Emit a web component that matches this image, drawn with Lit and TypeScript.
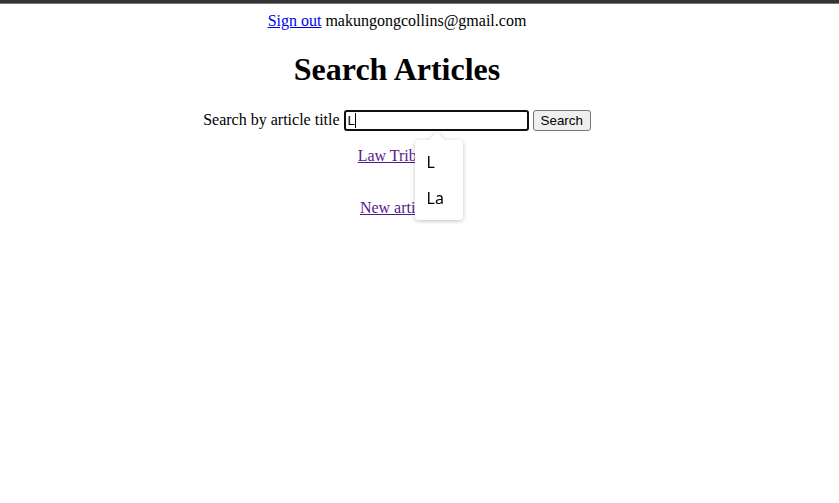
import { LitElement, html, css } from "lit";
import { customElement, state } from "lit/decorators.js";

@customElement("suggestion-list")
class SuggestionList extends LitElement {
  static properties = { items: { type: Array } };
  declare items: string[];

  constructor() {
    super();
    this.items = [];
  }

  static styles = css`
    :host {
      display: block;
      box-sizing: border-box;
      min-width: 48px;
      padding: 4px 0;
      background: #fff;
      border-radius: 4px;
      filter: drop-shadow(0 1px 2px rgba(0, 0, 0, 0.25));
      font: 16px/36px "Noto Sans", sans-serif;
      color: #000;
    }
    .arrow {
      position: absolute;
      left: 13px;
      top: -8px;
      display: block;
    }
    .list {
      list-style: none;
      margin: 0;
      padding: 0;
    }
    .item {
      padding: 0 12px;
      text-align: left;
    }
  `;

  render() {
    return html`
      <svg class="arrow" width="18" height="9" viewBox="0 0 18 9" aria-hidden="true">
        <path d="M0 9 L9 0 L18 9 Z" fill="#fff" />
      </svg>
      <ul class="list">
        ${this.items.map((item) => html`<li class="item">${item}</li>`)}
      </ul>
    `;
  }
}

@customElement("app-root")
class AppRoot extends LitElement {
  @state() private query = "L";

  static styles = css`
    :host {
      display: block;
      font: 16px/18px "Liberation Serif", serif;
      color: #000;
      background: #fff;
    }
    .topbar {
      height: 3px;
      background: #333;
      border-bottom: 1px solid #777;
    }
    .page {
      display: flex;
      flex-direction: column;
      align-items: center;
      padding: 8px 45px 8px 0;
    }
    .account,
    .title {
      margin: 0;
    }
    .title {
      font-size: 32px;
      line-height: 37px;
      font-weight: bold;
      padding: 21px 0 22px;
    }
    .signout {
      color: #0000ee;
    }
    .search {
      display: flex;
      align-items: flex-start;
      gap: 4px;
    }
    .label {
      line-height: 20px;
    }
    .field {
      position: relative;
      display: flex;
    }
    .input {
      box-sizing: border-box;
      width: 185px;
      height: 21px;
      margin: 0;
      padding: 0 2px;
      border: 2px solid #101010;
      border-radius: 3px;
      outline: none;
      background: #fff;
      color: #000;
      font-family: "Liberation Sans", sans-serif;
    }
    .caret {
      position: absolute;
      left: 11px;
      top: 3px;
      width: 1px;
      height: 15px;
      background: #000;
    }
    .suggestions {
      position: absolute;
      left: 71px;
      top: 30px;
      z-index: 1;
    }
    .submit {
      box-sizing: border-box;
      height: 21px;
      margin: 0;
      padding: 0 7px;
      border: 1px solid #767676;
      border-radius: 3px;
      background: #efefef;
      color: #000;
      font-family: "Liberation Sans", sans-serif;
    }
    .results {
      display: flex;
      flex-direction: column;
      align-items: center;
      gap: 34px;
      padding-top: 16px;
    }
    .article {
      color: #551a8b;
    }
  `;

  render() {
    return html`
      <div class="topbar"></div>
      <main class="page">
        <p class="account">
          <a class="signout" href="#signout">Sign out</a> makungongcollins@gmail.com
        </p>
        <h1 class="title">Search Articles</h1>
        <form class="search" @submit=${(e: Event) => e.preventDefault()}>
          <label class="label" for="query">Search by article title</label>
          <div class="field">
            <input
              class="input"
              id="query"
              type="text"
              autocomplete="off"
              .value=${this.query}
              @input=${(e: Event) => (this.query = (e.target as HTMLInputElement).value)}
            />
            ${this.query === "L" ? html`<span class="caret"></span>` : null}
            <suggestion-list class="suggestions" .items=${["L", "La"]}></suggestion-list>
          </div>
          <button class="submit" type="submit">Search</button>
        </form>
        <div class="results">
          <a class="article" href="#law-tribute">Law Tribute</a>
          <a class="article" href="#new-article">New article</a>
        </div>
      </main>
    `;
  }
}
